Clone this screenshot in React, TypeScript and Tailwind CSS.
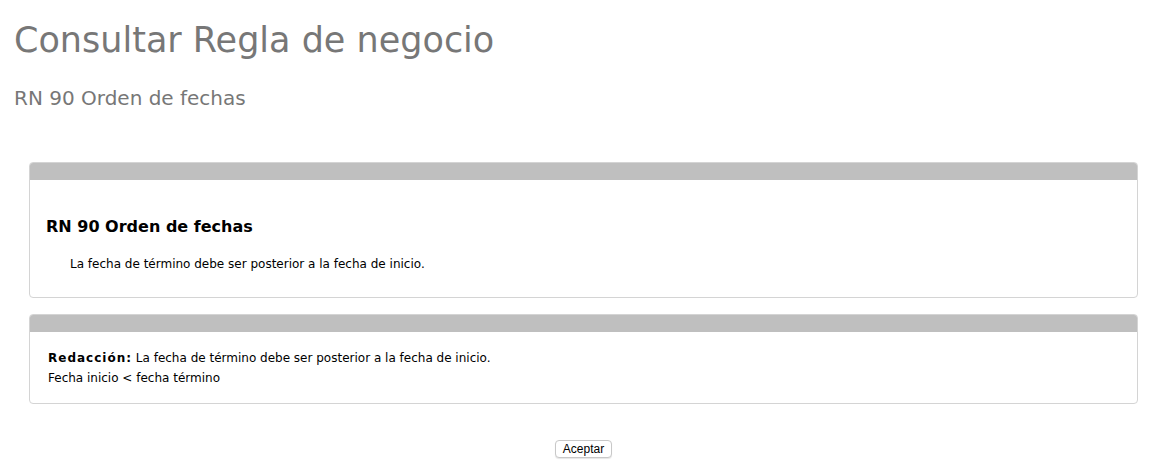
export default function App() {
  return (
    <div className="min-h-[473px] bg-white font-['DejaVu_Sans',Verdana,sans-serif]">
      <div className="px-[14px] pt-[18px]">
        <h1 className="text-[35px] leading-[44px] text-[#777777]">Consultar Regla de negocio</h1>
        <h2 className="mt-[24px] text-[20px] leading-[24px] text-[#777777]">RN 90 Orden de fechas</h2>
      </div>

      <div className="mt-[52px] px-[29px] flex flex-col gap-[16px]">
        {/* Regla */}
        <section className="rounded-[4px] border border-[#d4d4d4] overflow-hidden">
          <div className="h-[17px] bg-[#bfbfbf]" />
          <div className="px-[16px] pt-[37px] pb-[25px]">
            <h3 className="text-[16px] leading-[20px] font-bold text-black">RN 90 Orden de fechas</h3>
            <p className="mt-[19px] pl-[24px] text-[12px] leading-[16px] text-black">
              La fecha de término debe ser posterior a la fecha de inicio.
            </p>
          </div>
        </section>

        {/* Redacción */}
        <section className="rounded-[4px] border border-[#d4d4d4] overflow-hidden">
          <div className="h-[17px] bg-[#bfbfbf]" />
          <div className="px-[18px] pt-[16px] pb-[15px] text-[12px] leading-[20px] text-black">
            <p>
              <span className="font-bold tracking-[1px]">Redacción:</span> La fecha de término debe ser posterior a la fecha de inicio.
            </p>
            <p>Fecha inicio &lt; fecha término</p>
          </div>
        </section>
      </div>

      <div className="mt-[36px] flex justify-center">
        <button className="h-[18px] px-[7px] rounded-[4px] border border-[#c8c8c8] bg-white text-[12px] leading-[16px] text-black font-['Liberation_Sans',Arial,sans-serif] shadow-[0_1px_1px_rgba(0,0,0,0.1)]">
          Aceptar
        </button>
      </div>
    </div>
  );
}
